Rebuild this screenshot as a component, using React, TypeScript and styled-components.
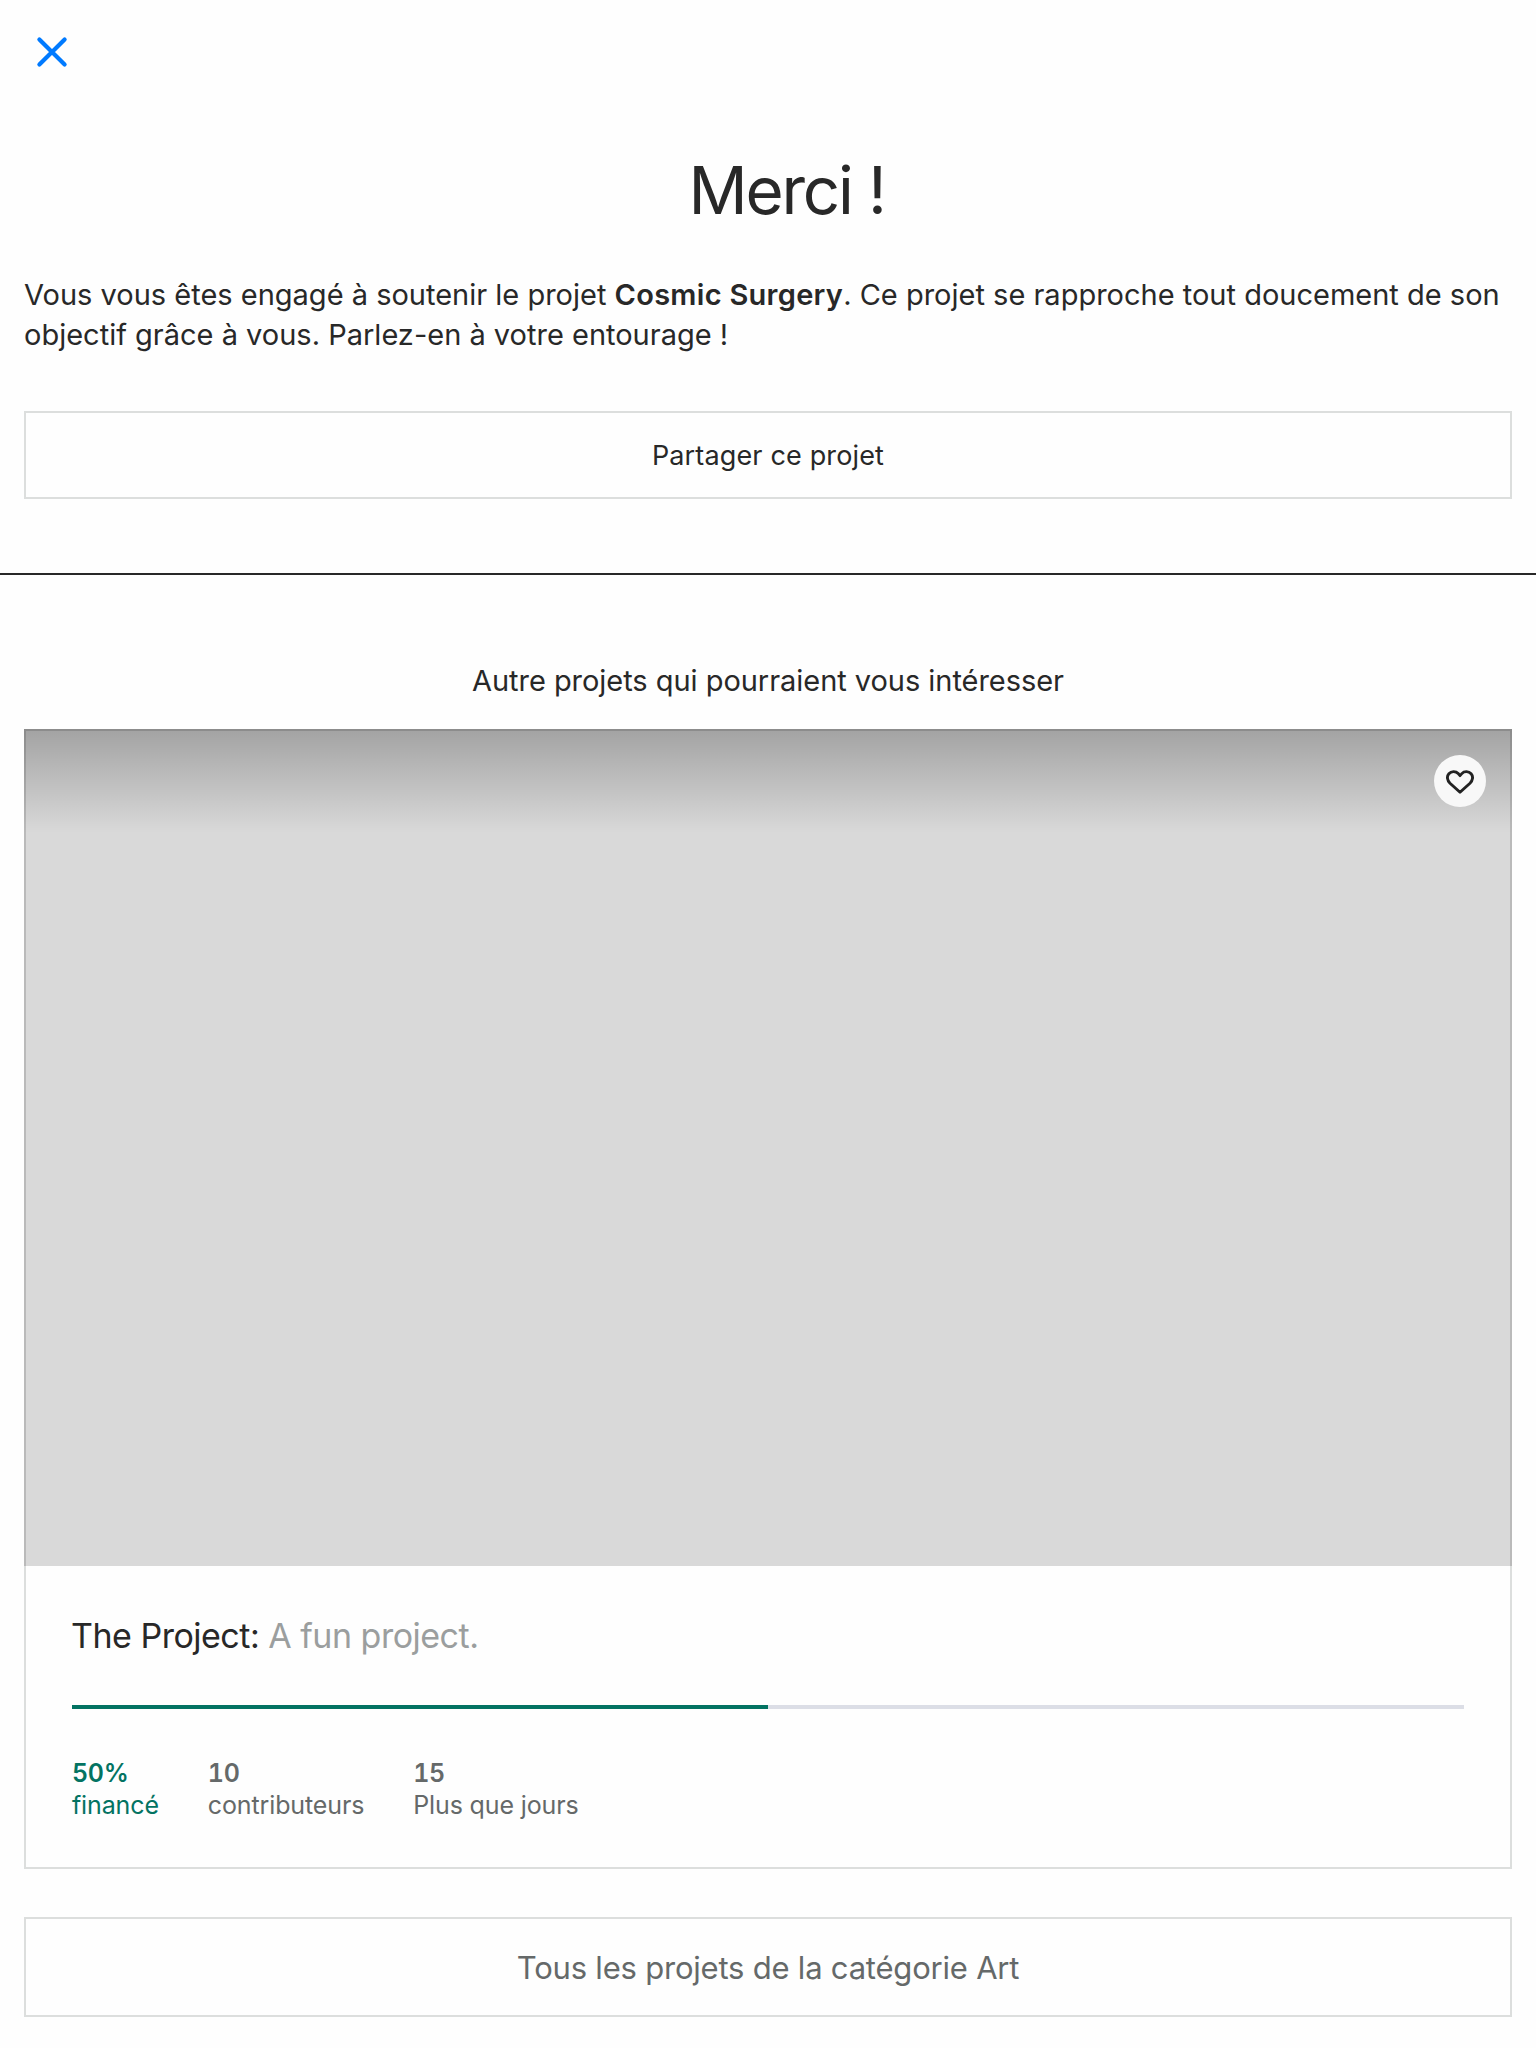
import React from 'react';
import styled, { createGlobalStyle } from 'styled-components';

const GlobalStyle = createGlobalStyle`
  * { box-sizing: border-box; }
  body {
    margin: 0;
    background: #fefefe;
    color: #282828;
    font-family: Inter, "Liberation Sans", sans-serif;
  }
  button { font-family: inherit; color: inherit; cursor: pointer; }
`;

const Screen = styled.div`
  display: flex;
  flex-direction: column;
  height: 2048px;
  overflow: hidden;
`;

const NavBar = styled.header`
  display: flex;
  height: 104px;
  padding: 36px;
`;

const CloseButton = styled.button`
  display: flex;
  width: 32px;
  height: 32px;
  padding: 0;
  border: 0;
  background: none;
`;

const Thanks = styled.section`
  display: flex;
  flex-direction: column;
  padding: 47px 24px 74px;
  border-bottom: 2px solid #282828;
`;

const Title = styled.h1`
  margin: 0;
  padding-left: 37px;
  font-size: 65.5px;
  line-height: 80px;
  font-weight: 400;
  letter-spacing: -2.2px;
  text-align: center;
`;

const Message = styled.p`
  margin: 44px 0 0;
  font-size: 29px;
  line-height: 40px;
  white-space: nowrap;

  strong { font-weight: 600; letter-spacing: 0.28px; }
`;

const OutlineButton = styled.button<{ $height: number; $size: number; $tone: string; $tracking: number }>`
  display: flex;
  align-items: center;
  justify-content: center;
  width: 100%;
  height: ${p => p.$height}px;
  padding: 0;
  border: 2px solid #dcdedd;
  background: #fefefe;
  color: ${p => p.$tone};
  font-size: ${p => p.$size}px;
  letter-spacing: ${p => p.$tracking}px;
`;

const ShareRow = styled.div`
  margin-top: 56px;
`;

const Discover = styled.section`
  display: flex;
  flex-direction: column;
  padding: 86px 24px 0;
`;

const SectionTitle = styled.h2`
  margin: 0;
  font-size: 29px;
  line-height: 40px;
  font-weight: 400;
  letter-spacing: -0.04px;
  text-align: center;
`;

const Card = styled.article`
  display: flex;
  flex-direction: column;
  height: 1140px;
  margin: 28px 0 48px;
  border: solid #dcdedd;
  border-width: 0 2px 2px;
`;

const Cover = styled.div`
  display: flex;
  justify-content: flex-end;
  height: 837px;
  margin: 0 -2px;
  padding: 24px;
  border: solid rgba(0, 0, 0, 0.14);
  border-width: 2px 2px 0;
  background: linear-gradient(rgba(0, 0, 0, 0.25), rgba(0, 0, 0, 0) 104px) border-box, #d9d9d9;
`;

const SaveButton = styled.button`
  display: flex;
  align-items: center;
  justify-content: center;
  width: 52px;
  height: 52px;
  padding: 2px 0 0;
  border: 0;
  border-radius: 50%;
  background: #f8f8f8;
`;

const CardBody = styled.div`
  display: flex;
  flex-direction: column;
  padding: 48px 46px 0;
`;

const ProjectName = styled.h3`
  margin: 0;
  font-size: 34px;
  line-height: 44px;
  font-weight: 400;
  letter-spacing: -0.5px;
  text-indent: -1px;

  span { color: #9b9e9e; }
`;

const Track = styled.div`
  height: 4px;
  margin-top: 47px;
  background: #dcdee6;
`;

const Fill = styled.div`
  height: 100%;
  background: #037362;
`;

const Stats = styled.dl`
  display: flex;
  gap: 49px;
  margin: 48px 0 0;
`;

const Stat = styled.div<{ $accent?: boolean }>`
  display: flex;
  flex-direction: column;
  color: ${p => (p.$accent ? '#037362' : '#656969')};
  font-size: 25px;
  line-height: 32px;

  dt { order: 2; letter-spacing: -0.13px; }
  dd {
    margin: 0;
    font-weight: 600;
    font-variant-numeric: tabular-nums;
    letter-spacing: -0.3px;
  }
`;

const PROGRESS = 50;

const STATS = [
  { value: `${PROGRESS}%`, label: 'financé', accent: true },
  { value: '10', label: 'contributeurs' },
  { value: '15', label: 'Plus que jours' },
];

export default function App() {
  return (
    <Screen>
      <GlobalStyle />
      <NavBar>
        <CloseButton aria-label="Fermer">
          <svg width="32" height="32" viewBox="0 0 32 32" fill="none" stroke="#007aff" strokeWidth="4.2" strokeLinecap="round">
            <path d="M3.4 3.4 L28.6 28.6 M28.6 3.4 L3.4 28.6" />
          </svg>
        </CloseButton>
      </NavBar>
      <Thanks>
        <Title>Merci !</Title>
        <Message>
          Vous vous êtes engagé à soutenir le projet <strong>Cosmic Surgery</strong>. Ce projet se rapproche tout doucement de son
          <br />
          objectif grâce à vous. Parlez-en à votre entourage !
        </Message>
        <ShareRow>
          <OutlineButton $height={88} $size={27} $tone="#282828" $tracking={0.15}>
            Partager ce projet
          </OutlineButton>
        </ShareRow>
      </Thanks>
      <Discover>
        <SectionTitle>Autre projets qui pourraient vous intéresser</SectionTitle>
        <Card>
          <Cover>
            <SaveButton aria-label="Enregistrer">
              <svg width="28" height="24" viewBox="0 0 28 24" fill="none" stroke="#222" strokeWidth="2.9" strokeLinejoin="round">
                <path d="M14 22.3 L4 13.2 C1.1 10.4 0.6 6.3 2.9 3.7 C5.3 1 9.7 .9 12.2 3.6 L14 5.6 L15.8 3.6 C18.3 .9 22.7 1 25.1 3.7 C27.4 6.3 26.9 10.4 24 13.2 Z" />
              </svg>
            </SaveButton>
          </Cover>
          <CardBody>
            <ProjectName>
              The Project: <span>A fun project.</span>
            </ProjectName>
            <Track>
              <Fill style={{ width: `${PROGRESS}%` }} />
            </Track>
            <Stats>
              {STATS.map(s => (
                <Stat key={s.label} $accent={s.accent}>
                  <dt>{s.label}</dt>
                  <dd>{s.value}</dd>
                </Stat>
              ))}
            </Stats>
          </CardBody>
        </Card>
        <OutlineButton $height={100} $size={31} $tone="#656969" $tracking={-0.21}>
          Tous les projets de la catégorie Art
        </OutlineButton>
      </Discover>
    </Screen>
  );
}
